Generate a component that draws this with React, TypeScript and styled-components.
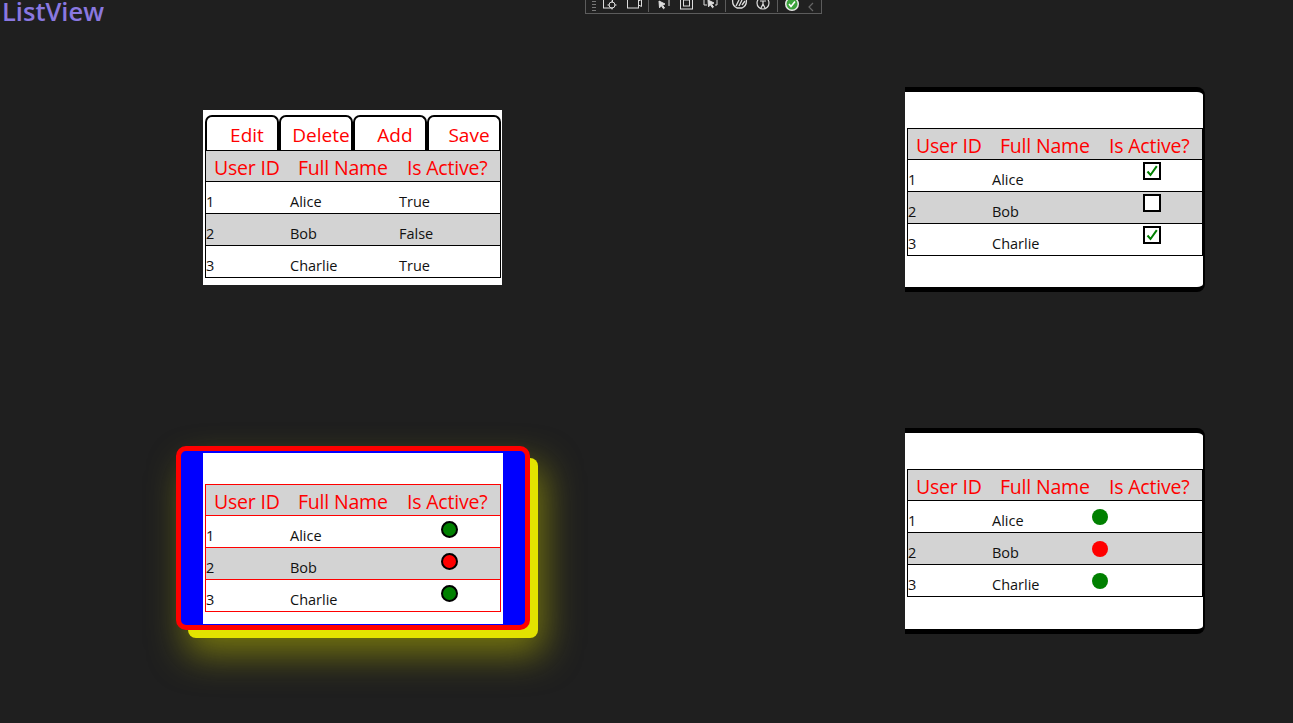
import React from "react"
import styled, { createGlobalStyle } from "styled-components"

type User = { id: number; name: string; active: boolean }
type StatusKind = "text" | "check" | "ring" | "dot"

const users: User[] = [
  { id: 1, name: "Alice", active: true },
  { id: 2, name: "Bob", active: false },
  { id: 3, name: "Charlie", active: true },
]

const tabs = ["Edit", "Delete", "Add", "Save"]

const GlobalStyle = createGlobalStyle`
  * { box-sizing: border-box; }
  html, body {
    margin: 0;
    background: #1f1f1f;
    font-family: "Open Sans", "Noto Sans", sans-serif;
  }
`

const Page = styled.div`
  width: 1293px;
  height: 723px;
  overflow: hidden;
`

const TopBar = styled.header`
  display: grid;
  grid-template-columns: 585px auto;
  height: 22px;
`

const Title = styled.h1`
  margin: 0;
  padding: 0 0 0 2px;
  font-size: 25.5px;
  line-height: 22px;
  font-weight: 600;
  color: #8a78e0;
`

const Toolbar = styled.div`
  display: flex;
  align-items: flex-end;
  width: 237px;
  height: 14px;
  overflow: hidden;
  border: 1px solid #5c5c5c;
  border-top: none;
  background: #202020;
  padding: 0 4px 1px 3px;
`

const ToolIcon = styled.span<{ $w?: number }>`
  display: flex;
  justify-content: center;
  width: ${p => p.$w ?? 26}px;
  svg { display: block; }
`

const ToolSep = styled.span`
  width: 1px;
  height: 13px;
  background: #5c5c5c;
  margin: 0 2px;
`

const Canvas = styled.main`
  display: grid;
  grid-template-columns: 905px 300px;
  grid-template-rows: 205px 206px;
  row-gap: 136px;
  padding-top: 65px;
`

const Slot = styled.div<{ $top?: number; $left?: number }>`
  padding-top: ${p => p.$top ?? 0}px;
  padding-left: ${p => p.$left ?? 0}px;
`

/* panel shells */

const TabPanel = styled.section`
  width: 299px;
  height: 175px;
  background: #fff;
  padding: 5px 1px 0 2px;
`

const TabStrip = styled.div`
  display: flex;
  height: 35px;
`

const Tab = styled.button`
  flex: 1;
  height: 35px;
  margin: 0;
  padding: 3px 0 0 10px;
  background: #fff;
  border: 2px solid #000;
  border-bottom: none;
  border-radius: 7px 7px 0 0;
  overflow: hidden;
  white-space: nowrap;
  font-family: inherit;
  font-size: 19px;
  line-height: 26px;
  color: #ff0000;
  text-align: center;
`

const FramedPanel = styled.section<{ $h: number }>`
  width: 300px;
  height: ${p => p.$h}px;
  background: #fff;
  border-top: 5px solid #000;
  border-bottom: 5px solid #000;
  border-right: 2px solid #000;
  border-radius: 0 8px 8px 0;
  padding: 36px 0 0 2px;
`

const GlowFrame = styled.section`
  width: 354px;
  height: 184px;
  border: 5px solid #ff0000;
  border-radius: 10px;
  background: #0000ff;
  padding: 2px 22px 1px;
  box-shadow:
    10px 10px 0 -2px #e3e300,
    12px 22px 36px 2px rgba(190, 190, 0, 0.55);
`

const GlowInner = styled.div`
  height: 100%;
  background: #fff;
  padding: 31px 0 0 2px;
`

/* table */

const Table = styled.div<{ $line: string }>`
  width: 296px;
  border: 1px solid ${p => p.$line};
  background: #fff;
`

const Row = styled.div<{ $line: string; $shade?: boolean; $head?: boolean }>`
  display: grid;
  grid-template-columns: 84px 109px 1fr;
  height: ${p => (p.$head ? 31 : 32)}px;
  border-bottom: 1px solid ${p => p.$line};
  background: ${p => (p.$shade ? "#d3d3d3" : "#fff")};
  &:last-child { border-bottom: none; height: 31px; }
`

const HeadCell = styled.div`
  display: flex;
  align-items: flex-end;
  padding: 0 0 0 8px;
  font-size: 19.5px;
  line-height: 26px;
  color: #ff0000;
  white-space: nowrap;
  letter-spacing: -0.2px;
`

const Cell = styled.div<{ $center?: boolean }>`
  display: flex;
  align-items: flex-end;
  justify-content: ${p => (p.$center ? "center" : "flex-start")};
  padding-bottom: 1px;
  font-size: 14.5px;
  line-height: 20px;
  color: #111;
  white-space: nowrap;
`

const MarkCell = styled.div<{ $kind: StatusKind }>`
  display: flex;
  align-items: flex-start;
  justify-content: ${p => (p.$kind === "dot" ? "flex-start" : "center")};
  padding-top: ${p => (p.$kind === "dot" ? 8 : p.$kind === "ring" ? 5 : 2)}px;
  margin-left: ${p => (p.$kind === "dot" ? -9 : 0)}px;
`

const CheckBox = styled.span`
  display: flex;
  align-items: center;
  justify-content: center;
  width: 18px;
  height: 18px;
  border: 2px solid #000;
  background: #fff;
`

const Ring = styled.span<{ $on: boolean }>`
  width: 17px;
  height: 17px;
  border-radius: 50%;
  border: 2px solid #000;
  background: ${p => (p.$on ? "#008000" : "#ff0000")};
`

const Dot = styled.span<{ $on: boolean }>`
  width: 16px;
  height: 16px;
  border-radius: 50%;
  background: ${p => (p.$on ? "#008000" : "#ff0000")};
`

const Status: React.FC<{ kind: StatusKind; on: boolean }> = ({ kind, on }) => {
  if (kind === "text") return <Cell>{on ? "True" : "False"}</Cell>
  return (
    <MarkCell $kind={kind}>
      {kind === "check" && (
        <CheckBox>
          {on && (
            <svg width="12" height="12" viewBox="0 0 12 12">
              <path d="M1.5 6.5 L4.5 10 L10.8 1.2" fill="none" stroke="#008000" strokeWidth="2" />
            </svg>
          )}
        </CheckBox>
      )}
      {kind === "ring" && <Ring $on={on} />}
      {kind === "dot" && <Dot $on={on} />}
    </MarkCell>
  )
}

const UserTable: React.FC<{ line?: string; kind: StatusKind }> = ({ line = "#000", kind }) => (
  <Table $line={line}>
    <Row $line={line} $shade $head>
      <HeadCell>User ID</HeadCell>
      <HeadCell>Full Name</HeadCell>
      <HeadCell>Is Active?</HeadCell>
    </Row>
    {users.map((u, i) => (
      <Row key={u.id} $line={line} $shade={i % 2 === 1}>
        <Cell>{u.id}</Cell>
        <Cell>{u.name}</Cell>
        <Status kind={kind} on={u.active} />
      </Row>
    ))}
  </Table>
)

const Tools: React.FC = () => (
  <Toolbar>
    <ToolIcon $w={10}>
      <svg width="4" height="12" viewBox="0 0 4 12">
        {[1, 4, 7, 10].map(y => (
          <rect key={y} x="0" y={y} width="4" height="1" fill="#777" />
        ))}
      </svg>
    </ToolIcon>
    <ToolIcon>
      <svg width="16" height="13" viewBox="0 0 16 13" fill="none" stroke="#ddd">
        <rect x="1.5" y="-2" width="9" height="11" />
        <circle cx="10" cy="6" r="3" fill="#202020" />
        <path d="M10 1.5v2M10 8.5v2M5.5 6h2M12.5 6h2" />
      </svg>
    </ToolIcon>
    <ToolIcon>
      <svg width="16" height="13" viewBox="0 0 16 13" fill="none" stroke="#ddd">
        <rect x="1.5" y="-2" width="11" height="11" />
        <path d="M12.5 2l3-1.5v7l-3-1.5" />
      </svg>
    </ToolIcon>
    <ToolSep />
    <ToolIcon>
      <svg width="16" height="13" viewBox="0 0 16 13" fill="none" stroke="#ddd">
        <path d="M3 -1h11v8" />
        <path d="M4 2l6 3-2.5 1 2 3-1 .8-2-3-2 2z" fill="#ddd" />
      </svg>
    </ToolIcon>
    <ToolIcon>
      <svg width="16" height="13" viewBox="0 0 16 13" fill="none" stroke="#ddd">
        <rect x="1.5" y="-2" width="12" height="12" />
        <rect x="4.5" y="1" width="6" height="6" />
      </svg>
    </ToolIcon>
    <ToolIcon>
      <svg width="16" height="13" viewBox="0 0 16 13" fill="none" stroke="#ddd">
        <path d="M1 -1v7h3M14 -1v7h-2" />
        <path d="M5 1l6 3-2.5 1 2 3-1 .8-2-3-2 2z" fill="#ddd" />
      </svg>
    </ToolIcon>
    <ToolSep />
    <ToolIcon>
      <svg width="17" height="13" viewBox="0 0 17 13" fill="none" stroke="#ddd" strokeWidth="1.3">
        <path d="M2 -1c-1 4 0 8 4 10h5c4-2 5-6 4-10" />
        <path d="M5 7l3-6M8 7l3-6M11 6l3-4" />
      </svg>
    </ToolIcon>
    <ToolIcon>
      <svg width="14" height="13" viewBox="0 0 14 13" fill="none" stroke="#ddd" strokeWidth="1.2">
        <circle cx="7" cy="4" r="6" />
        <path d="M4 2h6M7 2v3l-2 4M7 5l2 4" />
      </svg>
    </ToolIcon>
    <ToolSep />
    <ToolIcon>
      <svg width="16" height="13" viewBox="0 0 16 13">
        <circle cx="8" cy="5" r="7" fill="#e8e8e8" />
        <circle cx="8" cy="5" r="5.5" fill="#3ca33c" />
        <path d="M5 5l2 2.5 4-5" fill="none" stroke="#fff" strokeWidth="1.6" />
      </svg>
    </ToolIcon>
    <ToolIcon $w={14}>
      <svg width="6" height="10" viewBox="0 0 6 10" fill="none" stroke="#666" strokeWidth="1.2">
        <path d="M5 1L1 5l4 4" />
      </svg>
    </ToolIcon>
  </Toolbar>
)

const App: React.FC = () => {
  return (
    <Page>
      <GlobalStyle />
      <TopBar>
        <Title>ListView</Title>
        <Tools />
      </TopBar>
      <Canvas>
        <Slot $top={23} $left={203}>
          <TabPanel>
            <TabStrip>
              {tabs.map(t => (
                <Tab key={t}>{t}</Tab>
              ))}
            </TabStrip>
            <UserTable kind="text" />
          </TabPanel>
        </Slot>
        <Slot>
          <FramedPanel $h={205}>
            <UserTable kind="check" />
          </FramedPanel>
        </Slot>
        <Slot $top={18} $left={176}>
          <GlowFrame>
            <GlowInner>
              <UserTable kind="ring" line="#ff0000" />
            </GlowInner>
          </GlowFrame>
        </Slot>
        <Slot>
          <FramedPanel $h={206}>
            <UserTable kind="dot" />
          </FramedPanel>
        </Slot>
      </Canvas>
    </Page>
  )
}

export default App
